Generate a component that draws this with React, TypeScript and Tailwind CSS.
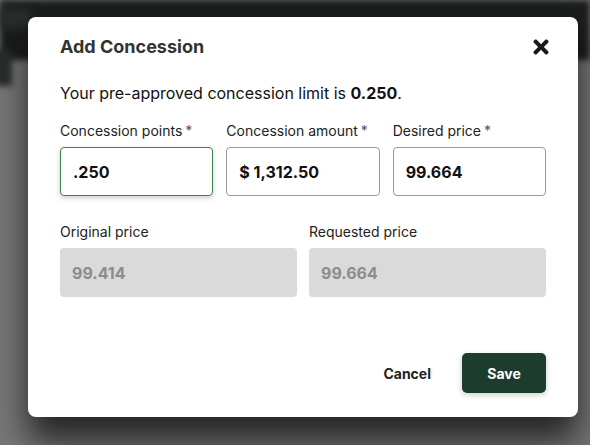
import React from "react";
import { FaTimes } from "react-icons/fa";

function Field({ label, value, focused }: { label: string; value: string; focused?: boolean }) {
  return (
    <div className="flex flex-col gap-[6px]">
      <label className="text-[14px] leading-[20px] text-[#222]">
        {label}
        <span className="text-[#555] ml-[3px]">*</span>
      </label>
      <div
        className={
          focused
            ? "h-[49px] rounded-[4px] border border-[#3f7f4f] shadow-[0_2px_5px_rgba(30,80,40,0.25)] flex items-center px-[12px] text-[16px] font-bold text-[#111]"
            : "h-[49px] rounded-[4px] border border-[#9a9a9a] flex items-center px-[12px] text-[16px] font-bold text-[#111]"
        }
      >
        {value}
      </div>
    </div>
  );
}

function ReadField({ label, value }: { label: string; value: string }) {
  return (
    <div className="flex flex-col gap-[6px]">
      <label className="text-[14px] leading-[20px] text-[#222]">{label}</label>
      <div className="h-[49px] rounded-[4px] bg-[#dadada] flex items-center px-[12px] text-[16px] font-bold text-[#8c8c8c]">
        {value}
      </div>
    </div>
  );
}

export default function App() {
  return (
    <div
      className="relative w-[590px] h-[445px] overflow-hidden bg-[#787878]"
      style={{ fontFamily: "Inter, 'Noto Sans', sans-serif" }}
    >
      <div className="absolute left-0 top-0 w-full h-[60px] bg-[#1b1d1d] blur-[3px]" />
      <div className="absolute left-[-6px] top-[50px] w-[18px] h-[36px] bg-[#2a2c2c] blur-[3px]" />
      <div className="absolute left-[0px] top-[8px] w-[30px] h-[20px] bg-[#2b2d2d] blur-[4px]" />
      <div className="absolute left-[28px] top-[17px] w-[550px] h-[400px] bg-white rounded-[8px] shadow-[0_24px_34px_rgba(0,0,0,0.7)] px-[32px] pt-[16px] pb-[24px] flex flex-col">
        <div className="flex items-center justify-between h-[28px]">
          <h2 className="text-[18px] leading-[28px] font-bold text-[#333]">Add Concession</h2>
          <FaTimes size={22} className="text-[#1a1a1a] mr-[-6px]" />
        </div>
        <p className="mt-[20px] text-[16px] leading-[24px] text-[#111]">
          Your pre-approved concession limit is <b>0.250</b>.
        </p>
        <div className="mt-[16px] grid grid-cols-3 gap-[13px]">
          <Field label="Concession points" value=".250" focused />
          <Field label="Concession amount" value="$ 1,312.50" />
          <Field label="Desired price" value="99.664" />
        </div>
        <div className="mt-[26px] grid grid-cols-2 gap-[12px]">
          <ReadField label="Original price" value="99.414" />
          <ReadField label="Requested price" value="99.664" />
        </div>
        <div className="mt-auto flex items-center justify-end gap-[15px]">
          <button className="px-[16px] h-[40px] text-[14px] font-bold text-[#222]">Cancel</button>
          <button className="w-[84px] h-[40px] rounded-[5px] bg-[#1c3d2e] text-white text-[14px] font-bold shadow-[0_2px_6px_rgba(0,0,0,0.2)]">
            Save
          </button>
        </div>
      </div>
    </div>
  );
}
